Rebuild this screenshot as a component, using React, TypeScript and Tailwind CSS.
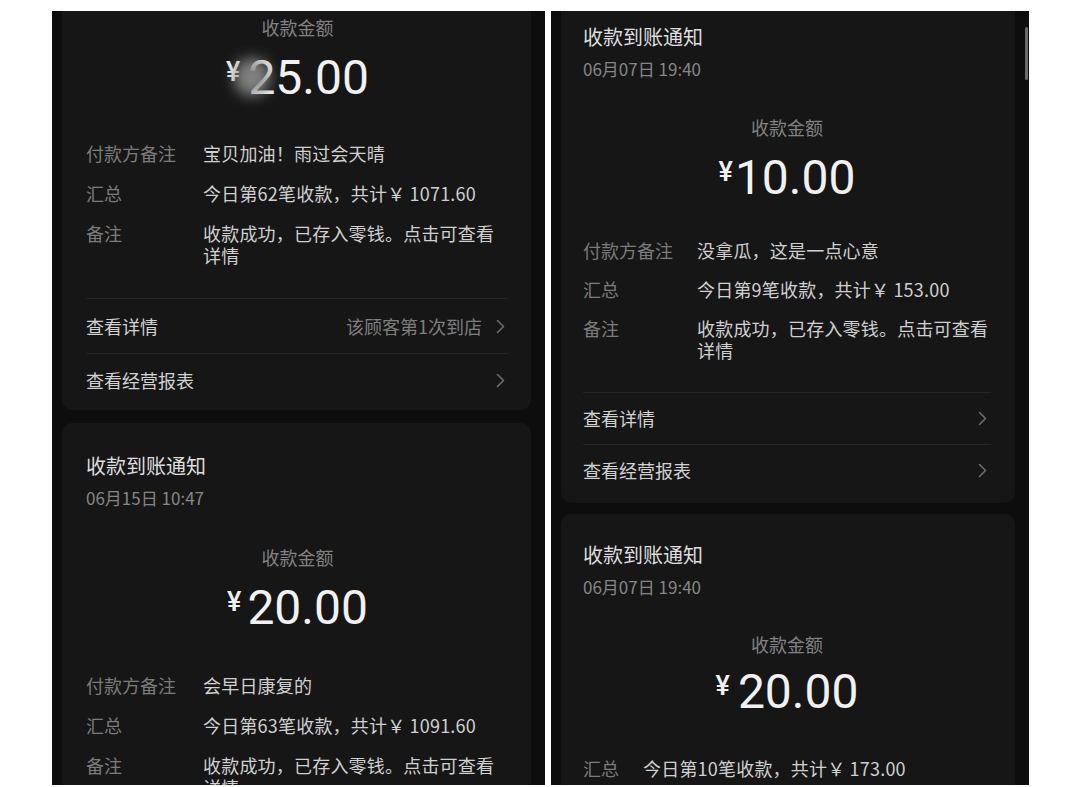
import React from "react";

const CJK = "font-['Noto_Sans_CJK_SC','Noto_Sans',sans-serif]";
const NUM = "font-['Roboto','Noto_Sans_CJK_SC',sans-serif]";

function Chevron() {
  return (
    <svg width="9" height="15" viewBox="0 0 9 15" fill="none">
      <polyline
        points="1.5,1.5 7.5,7.5 1.5,13.5"
        stroke="#6c6c6c"
        strokeWidth="1.6"
        strokeLinecap="round"
        strokeLinejoin="round"
      />
    </svg>
  );
}

function Amount({
  value,
  gap,
  h,
  blurred,
}: {
  value: string;
  gap: string;
  h: string;
  blurred?: boolean;
}) {
  return (
    <div className={`${h} flex items-center justify-center`}>
      <div className={`relative flex items-start ${gap} ${NUM} text-[#f1f1f1]`}>
        <span className="text-[27px] font-medium leading-none mt-[5px]">¥</span>
        <span className="text-[48px] leading-none">{value}</span>
        {blurred && (
          <span className="absolute left-[8px] top-[4px] w-[36px] h-[38px] rounded-full bg-[#8c8c8c] blur-[7px] opacity-90" />
        )}
      </div>
    </div>
  );
}

function Row({
  label,
  labelW,
  pb,
  children,
}: {
  label: string;
  labelW: string;
  pb: string;
  children: React.ReactNode;
}) {
  return (
    <div className={`flex pt-[9px] ${pb} text-[18px] leading-[22px] whitespace-nowrap`}>
      <div className={`${labelW} shrink-0 text-[#7b7b7b]`}>{label}</div>
      <div className="text-[#d0d0d0] tracking-[0.2px]">{children}</div>
    </div>
  );
}

function LinkRow({
  text,
  right,
  h,
  border,
}: {
  text: string;
  right?: string;
  h: string;
  border?: boolean;
}) {
  return (
    <div
      className={`${h} flex items-center justify-between ${
        border ? "border-t border-[#242424]" : ""
      }`}
    >
      <span className="text-[18px] text-[#d2d2d2]">{text}</span>
      <span className="flex items-center gap-[14px] pr-[4px]">
        {right && <span className="text-[18px] text-[#7e7e7e]">{right}</span>}
        <Chevron />
      </span>
    </div>
  );
}

function Caption() {
  return (
    <div className="h-[32px] flex items-center justify-center text-[18px] text-[#828282]">
      收款金额
    </div>
  );
}

function Header({ date }: { date: string }) {
  return (
    <>
      <div className="text-[20px] leading-[28px] text-[#dedede]">收款到账通知</div>
      <div className="mt-[7px] text-[17px] leading-[22px] text-[#868686]">{date}</div>
    </>
  );
}

function LeftPanel() {
  return (
    <div className={`w-[493px] h-[774px] bg-[#0d0d0d] overflow-hidden pl-[10px] pr-[14px] flex flex-col ${CJK}`}>
      <div className="h-[399px] shrink-0 bg-[#161616] rounded-b-[10px] pl-[24px] pr-[22px] flex flex-col">
        <Caption />
        <Amount value="25.00" gap="gap-[8px]" h="h-[70px]" blurred />
        <div className="mt-[20px]">
          <Row label="付款方备注" labelW="w-[117px]" pb="pb-[9px]">
            宝贝加油！雨过会天晴
          </Row>
          <Row label="汇总" labelW="w-[117px]" pb="pb-[9px]">
            今日第62笔收款，共计￥ 1071.60
          </Row>
          <Row label="备注" labelW="w-[117px]" pb="pb-[9px]">
            收款成功，已存入零钱。点击可查看
            <br />
            详情
          </Row>
        </div>
        <div className="mt-[23px]">
          <LinkRow text="查看详情" right="该顾客第1次到店" h="h-[55px]" border />
          <LinkRow text="查看经营报表" h="h-[53px]" border />
        </div>
      </div>
      <div className="h-[13px] shrink-0" />
      <div className="flex-1 bg-[#161616] rounded-t-[10px] pl-[24px] pr-[22px] pt-[29px] flex flex-col">
        <Header date="06月15日 10:47" />
        <div className="mt-[32px]">
          <Caption />
        </div>
        <Amount value="20.00" gap="gap-[6px]" h="h-[70px]" />
        <div className="mt-[22px]">
          <Row label="付款方备注" labelW="w-[117px]" pb="pb-[9px]">
            会早日康复的
          </Row>
          <Row label="汇总" labelW="w-[117px]" pb="pb-[9px]">
            今日第63笔收款，共计￥ 1091.60
          </Row>
          <Row label="备注" labelW="w-[117px]" pb="pb-[9px]">
            收款成功，已存入零钱。点击可查看
            <br />
            详情
          </Row>
        </div>
      </div>
    </div>
  );
}

function RightPanel() {
  return (
    <div className={`relative w-[478px] h-[774px] bg-[#0d0d0d] overflow-hidden pl-[10px] pr-[14px] flex flex-col ${CJK}`}>
      <div className="h-[492px] shrink-0 bg-[#161616] rounded-b-[10px] pl-[22px] pr-[24px] pt-[12px] flex flex-col">
        <Header date="06月07日 19:40" />
        <div className="mt-[31px]">
          <Caption />
        </div>
        <Amount value="10.00" gap="gap-[2px]" h="h-[70px]" />
        <div className="mt-[17px]">
          <Row label="付款方备注" labelW="w-[114px]" pb="pb-[8px]">
            没拿瓜，这是一点心意
          </Row>
          <Row label="汇总" labelW="w-[114px]" pb="pb-[8px]">
            今日第9笔收款，共计￥ 153.00
          </Row>
          <Row label="备注" labelW="w-[114px]" pb="pb-[8px]">
            收款成功，已存入零钱。点击可查看
            <br />
            详情
          </Row>
        </div>
        <div className="mt-[23px]">
          <LinkRow text="查看详情" h="h-[52px]" border />
          <LinkRow text="查看经营报表" h="h-[52px]" border />
        </div>
      </div>
      <div className="h-[11px] shrink-0" />
      <div className="flex-1 bg-[#161616] rounded-t-[10px] pl-[22px] pr-[24px] pt-[27px] flex flex-col">
        <Header date="06月07日 19:40" />
        <div className="mt-[30px]">
          <Caption />
        </div>
        <Amount value="20.00" gap="gap-[8px]" h="h-[64px]" />
        <div className="mt-[24px]">
          <Row label="汇总" labelW="w-[60px]" pb="pb-[9px]">
            今日第10笔收款，共计￥ 173.00
          </Row>
        </div>
      </div>
      <div className="absolute left-[474px] top-[16px] w-[3px] h-[53px] rounded-full bg-[#6a6a6a]" />
    </div>
  );
}

export default function App() {
  return (
    <div className="w-[1080px] h-[787px] bg-white overflow-hidden">
      <div className="flex pt-[11px] pl-[52px] gap-[6px]">
        <LeftPanel />
        <RightPanel />
      </div>
    </div>
  );
}
